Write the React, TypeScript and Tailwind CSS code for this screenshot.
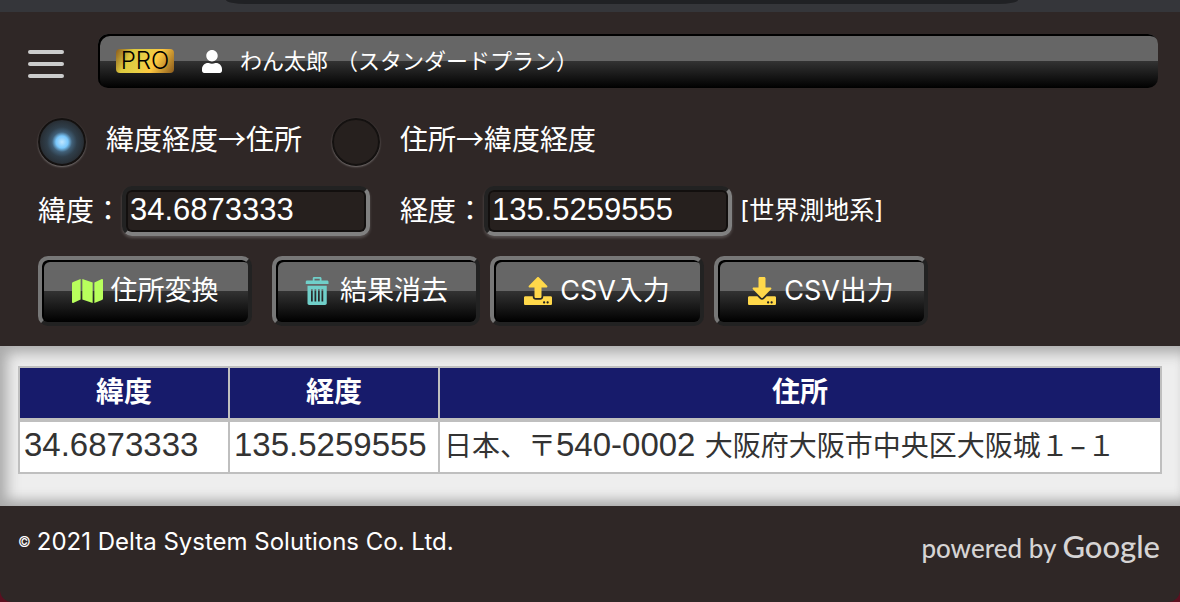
import { useState } from "react";
import { FaMap, FaUpload, FaDownload, FaUser } from "react-icons/fa";
import { ImBin } from "react-icons/im";

const gloss =
  "bg-[linear-gradient(180deg,#666_0%,#666_50%,#333_50%,#000_100%)] shadow-[inset_2px_2px_0_#000]";

const field =
  "h-[50px] w-[248px] rounded-[10px] border-4 border-t-[#222] border-l-[#222] border-r-[#808080] border-b-[#808080] bg-[#26201e] px-1 pb-0.5 font-['Liberation_Sans',sans-serif] text-[31px] text-white shadow-[inset_0_0_0_2px_#120f0e,0_2px_3px_rgba(255,255,255,0.2)] outline-none";

const radio =
  "size-12 shrink-0 appearance-none rounded-full border-2 border-[#141110] bg-[#26201e] shadow-[0_1px_2px_rgba(255,255,255,0.35)] checked:bg-[radial-gradient(circle,#bfe6ff_0px,#79c7fb_6px,#416078_10px,#2f3e4a_15px,#26292d_24px)]";

const numeric = "font-['Liberation_Sans',sans-serif] text-[33px]";
const cell = "border-2 border-t-4 border-[#bfbfbf] px-1 pb-1 leading-10 whitespace-nowrap";

const actions = [
  { label: "住所変換", Icon: FaMap, tint: "text-[#b8ff5c]", size: "w-[214px] mr-2.5", icon: "w-[31px] h-7" },
  { label: "結果消去", Icon: ImBin, tint: "text-[#70cfc9]", size: "w-[208px]", icon: "w-7 h-7" },
  { label: "CSV入力", Icon: FaUpload, tint: "text-[#ffd84a]", size: "w-[214px]", icon: "w-7 h-7" },
  { label: "CSV出力", Icon: FaDownload, tint: "text-[#ffd84a]", size: "w-[214px]", icon: "w-7 h-7" },
];

export default function App() {
  const [mode, setMode] = useState("toAddress");
  return (
    <div className="bg-[#5a1020]">
      <div className="min-h-screen overflow-hidden rounded-b-[12px] bg-[#2f2726] font-['Inter','Noto_Sans_CJK_JP',sans-serif] text-white">
        <div className="h-3 bg-[#35363a] pr-[162px] pl-[226px]">
          <div className="h-1 bg-[#202124] [border-radius:0_0_20px_20px/0_0_4px_4px]" />
        </div>
        <header className="flex items-center gap-[34px] pt-[22px] pr-[22px] pl-7">
          <button type="button" aria-label="メニュー" className="flex w-9 shrink-0 flex-col gap-2 pt-1.5">
            <span className="h-1 w-full rounded-sm bg-[#ccc]" />
            <span className="h-1 w-full rounded-sm bg-[#ccc]" />
            <span className="h-1 w-full rounded-sm bg-[#ccc]" />
          </button>
          <div className={"flex h-[54px] flex-1 items-center rounded-[10px] pl-[18px] text-[22px] " + gloss}>
            <span className="flex h-6 w-[58px] items-center justify-center rounded bg-[linear-gradient(120deg,#8a5a1c_0%,#ddc93e_25%,#e6cf45_45%,#ffc840_65%,#8a5a1c_100%)] text-2xl font-light text-black">
              PRO
            </span>
            <FaUser className="mr-[18px] ml-7 h-[23px] w-5" />
            <span className="flex gap-2">
              <span>わん太郎</span>
              <span>（スタンダードプラン）</span>
            </span>
          </div>
        </header>
        <main>
          <form className="px-[38px] pb-5" onSubmit={(e) => e.preventDefault()}>
            <div className="flex h-[98px] items-center pt-2.5 font-['Noto_Sans_CJK_JP',sans-serif] text-[28px] leading-10">
              <label className="flex items-center gap-5">
                <input type="radio" name="mode" className={radio} checked={mode === "toAddress"} onChange={() => setMode("toAddress")} />
                <span className="pb-2">緯度経度→住所</span>
              </label>
              <label className="ml-[30px] flex items-center gap-5">
                <input type="radio" name="mode" className={radio} checked={mode === "toPoint"} onChange={() => setMode("toPoint")} />
                <span className="pb-2">住所→緯度経度</span>
              </label>
            </div>
            <div className="flex items-center text-[28px]">
              <label htmlFor="lat">緯度：</label>
              <input id="lat" className={field} defaultValue="34.6873333" />
              <label htmlFor="lng" className="ml-[30px]">経度：</label>
              <input id="lng" className={field} defaultValue="135.5259555" />
              <span className="ml-2 text-[25px]">[世界測地系]</span>
            </div>
            <div className="mt-5 flex gap-2.5">
              {actions.map(({ label, Icon, tint, size, icon }) => (
                <button
                  key={label}
                  type="button"
                  className={
                    "flex h-[70px] items-center justify-center gap-2 rounded-[10px] border-4 border-t-[#777] border-l-[#777] border-r-[#222] border-b-[#222] text-[27px] " +
                    size + " " + gloss
                  }
                >
                  <Icon className={icon + " " + tint} />
                  <span>{label}</span>
                </button>
              ))}
            </div>
          </form>
          <section className="bg-[#eee] px-[18px] pt-5 pb-8 shadow-[inset_8px_8px_14px_-1px_#aaa,inset_0_-14px_12px_-8px_#aaa]">
            <table className="w-full table-fixed border-collapse text-[28px] text-[#333]">
              <thead>
                <tr className="h-[53px] bg-[#171b6b] text-white">
                  <th className="w-[210px] border-2 border-[#bfbfbf] pb-0.5">緯度</th>
                  <th className="w-[210px] border-2 border-[#bfbfbf] pb-0.5">経度</th>
                  <th className="border-2 border-[#bfbfbf] pb-0.5">住所</th>
                </tr>
              </thead>
              <tbody>
                <tr className="h-[53px] bg-white">
                  <td className={cell + " " + numeric}>34.6873333</td>
                  <td className={cell + " " + numeric}>135.5259555</td>
                  <td className={cell}>
                    日本、〒<span className={numeric}>540-0002 </span>大阪府大阪市中央区大阪城１−１
                  </td>
                </tr>
              </tbody>
            </table>
          </section>
        </main>
        <footer className="flex justify-between px-[18px] pt-5">
          <p className="flex items-center gap-1.5 self-start text-2xl leading-8">
            <span className="text-sm">©</span>
            <span>2021 Delta System Solutions Co. Ltd.</span>
          </p>
          <p className="pr-0.5 font-['Lato',sans-serif] text-[26px] leading-10 font-medium text-[#d6d4d4]">
            powered by <span className="text-[31px]">Google</span>
          </p>
        </footer>
      </div>
    </div>
  );
}
